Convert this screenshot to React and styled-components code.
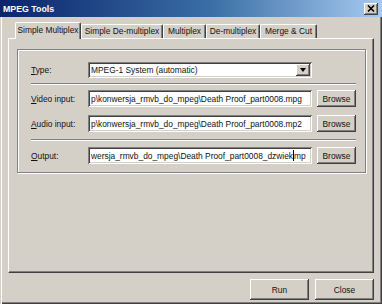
import React from 'react'
import styled, { createGlobalStyle } from 'styled-components'

const GlobalStyle = createGlobalStyle`
  html, body {
    margin: 0;
    padding: 0;
    background: #d4d0c8;
  }
  body {
    font-family: "Liberation Sans", Arial, sans-serif;
    font-size: 8.4px;
    color: #111;
  }
  * { box-sizing: border-box; }
`

const Window = styled.div`
  width: 382px;
  height: 304px;
  background: #d4d0c8;
  display: flex;
  flex-direction: column;
  box-shadow: inset 1px 0 #d4d0c8, inset 2px 0 #fff, inset -1px -1px #404040, inset -2px -2px #808080;
`

const TitleBar = styled.div`
  height: 17px;
  display: flex;
  align-items: center;
  justify-content: space-between;
  padding: 0 4px 0 3px;
  background: linear-gradient(to right, #0a246a, #3a6ea5 55%, #a6caf0);
  color: #fff;
  font-weight: bold;
  font-size: 8.8px;
`

const CloseButton = styled.div`
  width: 14px;
  height: 12px;
  background: #d4d0c8;
  display: flex;
  align-items: center;
  justify-content: center;
  box-shadow: inset -1px -1px #404040, inset 1px 1px #fff, inset -2px -2px #808080;
`

const Body = styled.div`
  flex: 1;
  display: flex;
  flex-direction: column;
  padding: 5px 8px 4px 8px;
`

const TabStrip = styled.div`
  display: flex;
  align-items: flex-end;
  height: 16px;
  padding-left: 7px;
  position: relative;
  z-index: 1;
`

const Tab = styled.div`
  width: ${p => p.$w}px;
  height: ${p => (p.$active ? '17px' : '14px')};
  margin-bottom: ${p => (p.$active ? '-1px' : '0')};
  padding-top: ${p => (p.$active ? '2px' : '1px')};
  text-align: center;
  background: #d4d0c8;
  white-space: nowrap;
  border-top: 1px solid #fff;
  border-left: 1px solid #fff;
  border-right: 1px solid #404040;
  border-radius: 2px 2px 0 0;
  box-shadow: inset -1px 0 #808080;
`

const Panel = styled.div`
  flex: 1;
  border-top: 1px solid #fff;
  border-left: 1px solid #fff;
  border-right: 1px solid #404040;
  border-bottom: 1px solid #404040;
  box-shadow: inset -1px -1px #808080;
  padding: 10px 7px 0 8px;
`

const Group = styled.div`
  border: 1px solid #808080;
  box-shadow: inset 1px 1px #fff, 1px 1px #fff;
  padding: 12px 9px 8px 13px;
  display: flex;
  flex-direction: column;
`

const Row = styled.div`
  display: flex;
  align-items: center;
  height: ${p => p.$h || 17}px;
  margin-top: ${p => p.$top || 0}px;
`

const Label = styled.div`
  width: 57px;
  flex: none;
  white-space: nowrap;
`

const Key = styled.span`
  text-decoration: underline;
`

const Field = styled.div`
  width: 224px;
  height: ${p => p.$h || 17}px;
  flex: none;
  background: #fff;
  display: flex;
  align-items: center;
  padding-left: 3px;
  white-space: nowrap;
  overflow: hidden;
  position: relative;
  box-shadow: inset 1px 1px #808080, inset -1px -1px #fff, inset 2px 2px #404040, inset -2px -2px #d4d0c8;
`

const Caret = styled.span`
  display: inline-block;
  width: 1px;
  height: 11px;
  background: #000;
  vertical-align: middle;
`

const DropButton = styled.div`
  position: absolute;
  right: 2px;
  top: 2px;
  bottom: 2px;
  width: 14px;
  background: #d4d0c8;
  display: flex;
  align-items: center;
  justify-content: center;
  box-shadow: inset -1px -1px #404040, inset 1px 1px #fff, inset -2px -2px #808080;
`

const Arrow = styled.div`
  width: 0;
  height: 0;
  border-left: 3.5px solid transparent;
  border-right: 3.5px solid transparent;
  border-top: 4px solid #000;
`

const Button = styled.div`
  width: ${p => p.$w}px;
  height: ${p => p.$h}px;
  flex: none;
  margin-left: ${p => p.$ml || 0}px;
  background: #d4d0c8;
  display: flex;
  align-items: center;
  justify-content: center;
  box-shadow: inset -1px -1px #404040, inset 1px 1px #fff, inset -2px -2px #808080;
`

const Separator = styled.div`
  height: 2px;
  margin-top: ${p => p.$top}px;
  border-top: 1px solid #808080;
  border-bottom: 1px solid #fff;
`

const Footer = styled.div`
  display: flex;
  justify-content: flex-end;
  gap: 6px;
  margin-top: 6px;
`

const tabs = [
  { name: 'Simple Multiplex', w: 66, active: true },
  { name: 'Simple De-multiplex', w: 82 },
  { name: 'Multiplex', w: 43 },
  { name: 'De-multiplex', w: 54 },
  { name: 'Merge & Cut', w: 57 },
]

const App = () => {
  return (
    <>
      <GlobalStyle />
      <Window>
        <TitleBar>
          <span>MPEG Tools</span>
          <CloseButton>
            <svg width="8" height="7" viewBox="0 0 8 7">
              <path d="M1 0.5 L7 6.5 M7 0.5 L1 6.5" stroke="#000" strokeWidth="1.6" />
            </svg>
          </CloseButton>
        </TitleBar>
        <Body>
          <TabStrip>
            {tabs.map(t => (
              <Tab key={t.name} $w={t.w} $active={t.active}>{t.name}</Tab>
            ))}
          </TabStrip>
          <Panel>
            <Group>
              <Row $h={16}>
                <Label><Key>T</Key>ype:</Label>
                <Field $h={16}>
                  MPEG-1 System (automatic)
                  <DropButton><Arrow /></DropButton>
                </Field>
              </Row>
              <Separator $top={5} />
              <Row $top={5}>
                <Label><Key>V</Key>ideo input:</Label>
                <Field>p\konwersja_rmvb_do_mpeg\Death Proof_part0008.mpg</Field>
                <Button $w={39} $h={17} $ml={5}>Browse</Button>
              </Row>
              <Row $top={8}>
                <Label><Key>A</Key>udio input:</Label>
                <Field>p\konwersja_rmvb_do_mpeg\Death Proof_part0008.mp2</Field>
                <Button $w={39} $h={17} $ml={5}>Browse</Button>
              </Row>
              <Separator $top={7} />
              <Row $top={6}>
                <Label><Key>O</Key>utput:</Label>
                <Field>wersja_rmvb_do_mpeg\Death Proof_part0008_dzwiek<Caret />mp</Field>
                <Button $w={39} $h={17} $ml={5}>Browse</Button>
              </Row>
            </Group>
          </Panel>
          <Footer>
            <Button $w={59} $h={21}>Run</Button>
            <Button $w={59} $h={21}>Close</Button>
          </Footer>
        </Body>
      </Window>
    </>
  )
}

export default App
